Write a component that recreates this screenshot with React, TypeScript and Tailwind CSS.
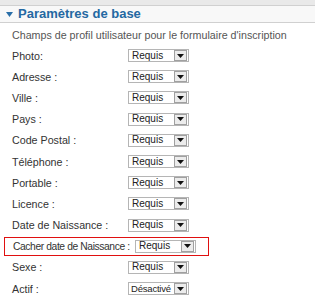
import React from "react";

const rows = [
  "Photo:",
  "Adresse :",
  "Ville :",
  "Pays :",
  "Code Postal :",
  "Téléphone :",
  "Portable :",
  "Licence :",
  "Date de Naissance :",
];

function Select({ value, small }: { value: string; small?: boolean }) {
  return (
    <div className="flex h-[13px] w-[61px] shrink-0 items-center overflow-hidden border border-[#b5b5b5] bg-white">
      <span
        className={
          small
            ? "flex-1 whitespace-nowrap pl-[2px] text-[9.5px] leading-none tracking-[-0.2px] text-[#222]"
            : "flex-1 whitespace-nowrap pl-[3px] text-[10px] leading-none text-[#222]"
        }
      >
        {value}
      </span>
      <span className="mr-[1px] flex h-[11px] w-[13px] shrink-0 items-center justify-center border border-[#a0a0a0] bg-[#ececec]">
        <svg width="7" height="4" viewBox="0 0 7 4">
          <path d="M0 0H7L3.5 4Z" fill="#111" />
        </svg>
      </span>
    </div>
  );
}

export default function App() {
  return (
    <div
      className="h-[300px] w-[315px] overflow-hidden bg-white text-[10.7px] text-[#333]"
      style={{ fontFamily: '"Liberation Sans", Arial, sans-serif' }}
    >
      <div className="h-[5px] bg-[#e9e9e9]" />
      <div className="flex h-[18px] items-center gap-[5px] border-b border-t border-[#d0d0d0] bg-[#f8f8f8] pl-[6px]">
        <svg width="7" height="5" viewBox="0 0 7 5">
          <path d="M0 0H7L3.5 5Z" fill="#2a6ea8" />
        </svg>
        <span className="text-[13px] font-bold text-[#2468a2]">Paramètres de base</span>
      </div>
      <div className="pl-[12px] pt-[6px] leading-[13px] text-[#555]">
        Champs de profil utilisateur pour le formulaire d'inscription
      </div>
      <div className="mt-[3px]">
        {rows.map((r) => (
          <div key={r} className="flex h-[21.2px] items-center">
            <span className="w-[128px] shrink-0 whitespace-nowrap pl-[12px]">{r}</span>
            <Select value="Requis" />
          </div>
        ))}
        <div className="flex h-[21.2px] items-center">
          <div className="ml-[4px] flex h-[19px] w-[205px] items-center border border-[#e01010]">
            <span className="w-[130px] shrink-0 whitespace-nowrap pl-[8px] text-[10.3px] tracking-[-0.4px]">
              Cacher date de Naissance :
            </span>
            <Select value="Requis" />
          </div>
        </div>
        <div className="flex h-[21.2px] items-center">
          <span className="w-[128px] shrink-0 whitespace-nowrap pl-[12px]">Sexe :</span>
          <Select value="Requis" />
        </div>
        <div className="flex h-[21.2px] items-center">
          <span className="w-[128px] shrink-0 whitespace-nowrap pl-[12px]">Actif :</span>
          <Select value="Désactivé" small />
        </div>
      </div>
    </div>
  );
}
